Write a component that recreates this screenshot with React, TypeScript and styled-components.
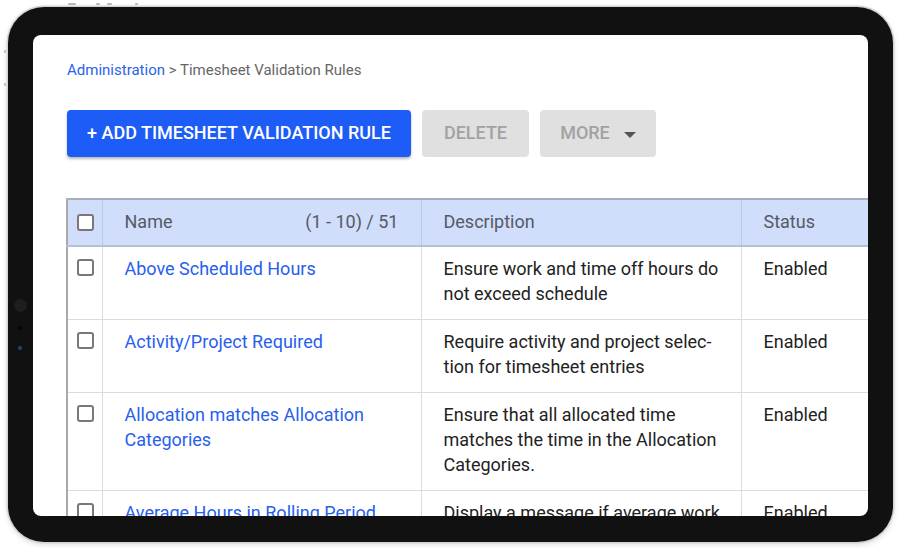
import React from 'react';
import styled, { createGlobalStyle } from 'styled-components';

const GlobalStyle = createGlobalStyle`
  html, body {
    margin: 0;
    background: #ffffff;
    font-family: Roboto, 'Liberation Sans', Arial, sans-serif;
  }
  * {
    box-sizing: border-box;
  }
`;

type Rule = {
  name: string;
  description: string;
  status: string;
};

const rules: Rule[] = [
  {
    name: 'Above Scheduled Hours',
    description: 'Ensure work and time off hours do not exceed schedule',
    status: 'Enabled',
  },
  {
    name: 'Activity/Project Required',
    description: 'Require activity and project selec\u00ADtion for timesheet entries',
    status: 'Enabled',
  },
  {
    name: 'Allocation matches Allocation Categories',
    description: 'Ensure that all allocated time matches the time in the Allocation Categories.',
    status: 'Enabled',
  },
  {
    name: 'Average Hours in Rolling Period',
    description: 'Display a message if average work hours exceed the limit',
    status: 'Enabled',
  },
];

const Stage = styled.div`
  width: 900px;
  height: 548px;
  padding: 7px 0 0 8px;
`;

const Device = styled.div`
  position: relative;
  width: 885px;
  height: 535px;
  padding: 28px 25px 26px 25px;
  background: #111111;
  border-radius: 36px;
  box-shadow: 0 0 0 1.5px #d4d4d4, 0 2px 6px rgba(0, 0, 0, 0.18);
`;

const Key = styled.span<{ $left: number; $width: number }>`
  position: absolute;
  top: -4px;
  left: ${(p) => p.$left}px;
  width: ${(p) => p.$width}px;
  height: 2px;
  border-radius: 1px;
  background: #b9b9b9;
`;

const SideKey = styled.span<{ $top: number }>`
  position: absolute;
  left: -4px;
  top: ${(p) => p.$top}px;
  width: 2px;
  height: 3px;
  background: #c4c4c4;
`;

const Lens = styled.span<{ $top: number; $size: number; $color: string }>`
  position: absolute;
  left: ${(p) => 12 - p.$size / 2}px;
  top: ${(p) => p.$top - p.$size / 2}px;
  width: ${(p) => p.$size}px;
  height: ${(p) => p.$size}px;
  border-radius: 50%;
  background: ${(p) => p.$color};
`;

const Screen = styled.div`
  width: 100%;
  height: 100%;
  background: #ffffff;
  border-radius: 8px;
  overflow: hidden;
  padding: 25px 0 0 34px;
  display: flex;
  flex-direction: column;
`;

const Breadcrumb = styled.div`
  font-size: 15px;
  line-height: 20px;
  color: #666666;
  white-space: nowrap;
`;

const Crumb = styled.a`
  color: #2c62ea;
  text-decoration: none;
  cursor: pointer;
`;

const Toolbar = styled.div`
  display: flex;
  gap: 11px;
  margin-top: 30px;
`;

const Button = styled.button<{ $primary?: boolean; $width?: number }>`
  height: 47px;
  ${(p) => (p.$width ? `width: ${p.$width}px;` : '')}
  padding: 0 20px 3px;
  display: flex;
  align-items: center;
  justify-content: center;
  gap: 14px;
  border: none;
  border-radius: 4px;
  font-family: Roboto, 'Liberation Sans', Arial, sans-serif;
  font-size: 18px;
  font-weight: 500;
  letter-spacing: 0;
  text-transform: uppercase;
  white-space: nowrap;
  color: ${(p) => (p.$primary ? '#ffffff' : '#a2a2a2')};
  background: ${(p) => (p.$primary ? '#1d5cf6' : '#e0e0e0')};
  box-shadow: ${(p) => (p.$primary ? '0 2px 3px rgba(0, 0, 0, 0.28)' : 'none')};
  cursor: pointer;
`;

const Caret = styled.span`
  width: 0;
  height: 0;
  margin-top: 5px;
  border-left: 6px solid transparent;
  border-right: 6px solid transparent;
  border-top: 6px solid #555555;
`;

const TableWrap = styled.div`
  margin: 41px 0 0 -1px;
`;

const Table = styled.table`
  width: 834px;
  table-layout: fixed;
  border-collapse: collapse;
  border-left: 2px solid #a9a9a9;
  font-size: 18px;
  line-height: 25px;
`;

const HeadRow = styled.tr`
  height: 47px;
  background: #d0defb;
  border-top: 2px solid #a9aeb8;
  border-bottom: 2px solid #b3bfdb;
`;

const Th = styled.th<{ $check?: boolean }>`
  padding: ${(p) => (p.$check ? '0 0 0 9px' : '0 22px 3px 22px')};
  text-align: left;
  font-weight: 400;
  color: #555a63;
  vertical-align: middle;
  border-right: 1px solid #bccae6;
`;

const HeadSplit = styled.div`
  display: flex;
  justify-content: space-between;
  align-items: center;
`;

const Row = styled.tr`
  border-bottom: 1px solid #dcdcdc;
`;

const Td = styled.td<{ $check?: boolean }>`
  padding: ${(p) => (p.$check ? '12px 0 0 9px' : '9px 16px 13px 22px')};
  vertical-align: top;
  color: #222222;
  border-right: 1px solid #dcdcdc;
`;

const NameLink = styled.a`
  color: #2760ee;
  text-decoration: none;
  cursor: pointer;
`;

const Box = styled.span`
  display: block;
  width: 17px;
  height: 17px;
  border: 2px solid #787878;
  border-radius: 3px;
  background: #ffffff;
`;

export default function App() {
  return (
    <>
      <GlobalStyle />
      <Stage>
        <Device>
          <Key $left={60} $width={8} />
          <Key $left={88} $width={4} />
          <Key $left={99} $width={5} />
          <Key $left={127} $width={3} />
          <SideKey $top={43} />
          <SideKey $top={76} />
          <Lens $top={298} $size={13} $color="#1e1e1e" />
          <Lens $top={321} $size={4} $color="#050505" />
          <Lens $top={341} $size={4} $color="#25407a" />
          <Screen>
            <Breadcrumb>
              <Crumb>Administration</Crumb> &gt; Timesheet Validation Rules
            </Breadcrumb>
            <Toolbar>
              <Button $primary>+ Add Timesheet Validation Rule</Button>
              <Button $width={107}>Delete</Button>
              <Button $width={116}>
                More
                <Caret />
              </Button>
            </Toolbar>
            <TableWrap>
              <Table>
                <colgroup>
                  <col style={{ width: 35 }} />
                  <col style={{ width: 319 }} />
                  <col style={{ width: 320 }} />
                  <col style={{ width: 160 }} />
                </colgroup>
                <thead>
                  <HeadRow>
                    <Th $check>
                      <Box />
                    </Th>
                    <Th>
                      <HeadSplit>
                        <span>Name</span>
                        <span>(1 - 10) / 51</span>
                      </HeadSplit>
                    </Th>
                    <Th>Description</Th>
                    <Th>Status</Th>
                  </HeadRow>
                </thead>
                <tbody>
                  {rules.map((rule) => (
                    <Row key={rule.name}>
                      <Td $check>
                        <Box />
                      </Td>
                      <Td>
                        <NameLink>{rule.name}</NameLink>
                      </Td>
                      <Td>{rule.description}</Td>
                      <Td>{rule.status}</Td>
                    </Row>
                  ))}
                </tbody>
              </Table>
            </TableWrap>
          </Screen>
        </Device>
      </Stage>
    </>
  );
}
